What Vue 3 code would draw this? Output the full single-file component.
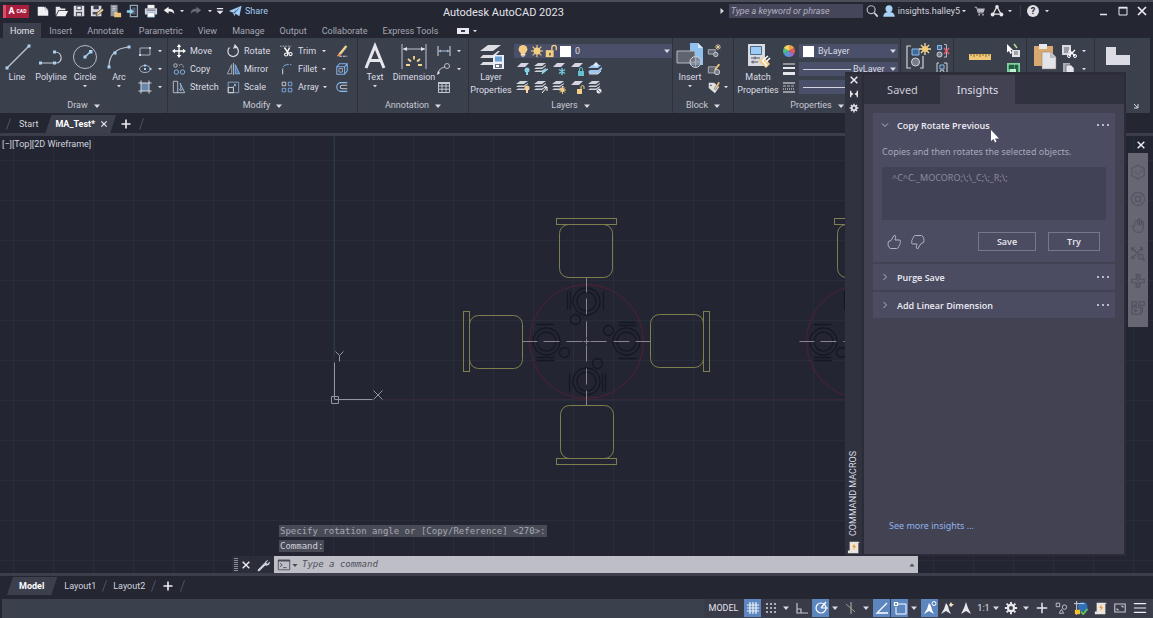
<script setup>
import { ref } from 'vue'

const quickAccess = ['new', 'open', 'save', 'saveas', 'webopen', 'websave', 'print', 'undo']
const ribbonTabs = ['Home', 'Insert', 'Annotate', 'Parametric', 'View', 'Manage', 'Output', 'Collaborate', 'Express Tools']
const drawTools = [
  { name: 'Line', icon: 'line' },
  { name: 'Polyline', icon: 'polyline' },
  { name: 'Circle', icon: 'circle', caret: true },
  { name: 'Arc', icon: 'arc', caret: true },
]
const modifyTools = [
  { name: 'Move', icon: 'move' }, { name: 'Rotate', icon: 'rotate' }, { name: 'Trim', icon: 'trim', caret: true }, { name: '', label: 'Erase', icon: 'erase' },
  { name: 'Copy', icon: 'copy' }, { name: 'Mirror', icon: 'mirror' }, { name: 'Fillet', icon: 'fillet', caret: true }, { name: '', label: 'Explode', icon: 'explode' },
  { name: 'Stretch', icon: 'stretch' }, { name: 'Scale', icon: 'scale' }, { name: 'Array', icon: 'array', caret: true }, { name: '', label: 'Offset', icon: 'offset' },
]
const layerBadges = ['b-off', 'b-iso', 'b-freeze', 'b-lock', 'b-cur', 'b-on', 'b-uniso', 'b-thaw', 'b-unlock', 'b-match']
const status = [
  { icon: 'st-grid', size: 'w18', on: true, label: 'Grid' },
  { icon: 'st-snap', size: 'w19', label: 'Snap' },
  { icon: 'caret', size: 'w12', label: 'Snap options' },
  { icon: 'st-ortho', size: 'w19', label: 'Ortho' },
  { icon: 'st-polar', size: 'w18', on: true, label: 'Polar' },
  { icon: 'caret', size: 'w12', label: 'Polar options' },
  { icon: 'st-iso', size: 'w19', label: 'Isodraft' },
  { icon: 'caret', size: 'w12', label: 'Isodraft options' },
  { icon: 'st-track', size: 'w18', on: true, label: 'Tracking' },
  { icon: 'st-osnap', size: 'w18', on: true, label: 'Object snap' },
  { icon: 'caret', size: 'w12', label: 'Object snap options' },
  { icon: 'st-ann', size: 'w18', on: true, label: 'Annotation visibility' },
  { icon: 'st-auto', size: 'w18', label: 'Autoscale' },
  { icon: 'st-scale', size: 'w19', label: 'Annotation scale' },
]
const status2 = [
  { icon: 'gear', size: 'w19', label: 'Workspace' },
  { icon: 'caret', size: 'w12', label: 'Workspace options' },
  { icon: 'st-plus', size: 'w19', label: 'Annotation monitor' },
  { icon: 'st-isolate', size: 'w20', label: 'Isolate objects' },
  { icon: 'st-perf', size: 'w20', label: 'Graphics performance' },
  { icon: 'st-macro', size: 'w19', label: 'Command macros' },
  { icon: 'st-full', size: 'w20', label: 'Clean screen' },
  { icon: 'st-menu', size: 'w20', label: 'Customization' },
]
const navTools = ['n-wheel', 'n-wheel2', 'n-hand', 'n-zoom', 'n-orbit', 'n-motion']
const macro = ref('^C^C._MOCORO;\\;\\_C;\\;_R;\\;')
const command = ref('')
const keyword = ref('')
</script>

<template>
  <div class="app">
    <svg class="sprite" aria-hidden="true">
      <symbol id="caret" viewBox="0 0 16 16"><path d="M0 4h16l-8 9z" fill="#d9dae2" /></symbol>
      <symbol id="new" viewBox="0 0 16 16"><path d="M2 3h7l5 5v5.500H2z" fill="#f1f1f4" /><path d="M10 2.500 14.500 7H10z" fill="#c5c6cf" /></symbol>
      <symbol id="open" viewBox="0 0 16 16"><path d="M2 13V3h4.500l1.500 2h5v2H5z" fill="#e5e5ea" /><path d="M5.500 8H16l-3 6H2.500z" fill="#f1f1f4" /></symbol>
      <symbol id="save" viewBox="0 0 16 16"><path d="M2 2h12v12H2z" fill="#dcdce3" /><path d="M5 2h6v5H5z" fill="#3a3b47" /><path d="M6 3h4v3H6z" fill="#f4f4f6" /><path d="M4.500 9h7v5h-7z" fill="#4a4b57" /><path d="M5.500 10.500h5v3h-5z" fill="#dcdce3" /></symbol>
      <symbol id="saveas" viewBox="0 0 16 16"><path d="M1 2h12v12H1z" fill="#dcdce3" /><path d="M4 2h6v4H4z" fill="#3a3b47" /><path d="M3 9h6v3H3z" fill="#4a4b57" /><path d="M7 13.500 8 10l6-5 2 2-6 5z" fill="#f0cf93" stroke="#23242f" stroke-width=".7" /></symbol>
      <symbol id="webopen" viewBox="0 0 16 16"><path d="M3 1h8v13H3z" fill="#8e93a0" /><path d="M5 3h4M5 5h4M5 7h3" stroke="#cfd1da" /><path d="M7 9h3l1 1h4v5H7z" fill="#e8c37b" /></symbol>
      <symbol id="websave" viewBox="0 0 16 16"><path d="M5 1.500h8v13H5z" fill="none" stroke="#8fa6b5" stroke-width="1.500" /><path d="M7 4h4v8H7z" fill="#55606e" /><path d="M1 7h4V5l4 3.500L5 12v-2H1z" fill="#8fd0ee" /></symbol>
      <symbol id="print" viewBox="0 0 16 16"><path d="M4 1h8v4H4z" fill="#f1f1f4" /><path d="M1 5h14v7H1z" fill="#cfd4dc" /><path d="M3 7h10" stroke="#525866" /><path d="M4 10h8v5H4z" fill="#fff" stroke="#7fa9d0" stroke-width=".8" /></symbol>
      <symbol id="undo" viewBox="0 0 16 16"><path d="M2 7 7.500 3v2.500c4 0 6.500 1.500 6.500 6-1.500-2.500-3.500-3-6.500-3V11z" fill="#f1f1f4" /></symbol>
      <symbol id="redo" viewBox="0 0 16 16"><path d="M14 7 8.500 3v2.500c-4 0-6.500 1.500-6.500 6 1.500-2.500 3.500-3 6.500-3V11z" fill="#676975" /></symbol>
      <symbol id="custom" viewBox="0 0 16 16"><path d="M3 3h10v2H3zM2.500 7.500h11L8 13z" fill="#e7e7ec" /></symbol>
      <symbol id="plane" viewBox="0 0 16 16"><path d="M1 8 15.500 2 13 14 8.500 11 7 14 6 10z" fill="#a3cdf2" /><path d="M6 10 14 3.500 7.500 10.500" fill="#35557c" /></symbol>
      <symbol id="search" viewBox="0 0 16 16"><circle cx="7" cy="6.500" r="4.500" fill="none" stroke="#b4b5bf" stroke-width="1.400" /><path d="m10.500 10 4 4.500" stroke="#d4d5dd" stroke-width="2" /></symbol>
      <symbol id="user" viewBox="0 0 16 16"><circle cx="8" cy="5.500" r="4" fill="#a9d0f5" /><path d="M1.500 14.500c0-4 3-5.500 6.500-5.500s6.500 1.500 6.500 5.500z" fill="#a9d0f5" /></symbol>
      <symbol id="cart" viewBox="0 0 16 16"><path d="M1 3h2.500l2 7.500h7" fill="none" stroke="#b9bac4" stroke-width="1.300" /><path d="M4.500 4.500h10l-1.500 5H6zM6 12h2v2H6zm5 0h2v2h-2z" fill="#b9bac4" /></symbol>
      <symbol id="adsk" viewBox="0 0 16 16"><path d="M8 3 3.500 11.500h9z" fill="none" stroke="#e7e7ec" stroke-width="1.500" /><circle cx="8" cy="3" r="2" fill="#e7e7ec" /><circle cx="3" cy="12" r="2.200" fill="#e7e7ec" /><circle cx="13" cy="12" r="2.200" fill="#e7e7ec" /></symbol>
      <symbol id="min" viewBox="0 0 12 12"><path d="M2 9.500h7" stroke="#e7e7ec" stroke-width="1.500" /></symbol>
      <symbol id="max" viewBox="0 0 12 12"><path d="M2 3h8v7H2z" fill="none" stroke="#e7e7ec" /><path d="M1.500 2.500h9" stroke="#e7e7ec" stroke-width="1.500" /></symbol>
      <symbol id="close" viewBox="0 0 12 12"><path d="m2 2 8 8m0-8-8 8" stroke="#eeeef2" stroke-width="1.700" /></symbol>
      <symbol id="plus" viewBox="0 0 12 12"><path d="M6 1.500v9M1.500 6h9" stroke="#eeeef2" stroke-width="1.600" /></symbol>

      <symbol id="line" viewBox="0 0 28 28"><path d="M4 26 26 4" stroke="#c2c8d3" stroke-width="1.200" /><path d="M2.500 24.500h3v3h-3zm22-22h3v3h-3z" fill="#a9d0f5" /></symbol>
      <symbol id="polyline" viewBox="0 0 28 28"><path d="M3 21h16c7 0 7-11-1-11" fill="none" stroke="#c2c8d3" stroke-width="1.200" /><path d="M2 19.500h3v3H2zm14 0h3v3h-3zm0-11h3v3h-3z" fill="#a9d0f5" /></symbol>
      <symbol id="circle" viewBox="0 0 28 28"><circle cx="14" cy="15" r="11.500" fill="none" stroke="#b6bcc8" /><path d="m14 15 6-6" stroke="#a9d0f5" stroke-width="1.500" /><path d="M12.500 13.500h3v3h-3zM18 8h3.500v3.500H18z" fill="#a9d0f5" /></symbol>
      <symbol id="arc" viewBox="0 0 28 28"><path d="M4 25C4 13 11 6 24 5" fill="none" stroke="#c2c8d3" stroke-width="1.200" /><path d="M2.500 23.500h3v3h-3zm6-14h3v3h-3zm14-6h3v3h-3z" fill="#a9d0f5" /></symbol>
      <symbol id="rect" viewBox="0 0 16 16"><path d="M3 5h10v7H3z" fill="none" stroke="#aab0bd" /><path d="M2 11h2v2H2zM12 4h2v2h-2z" fill="#c7dcf3" /></symbol>
      <symbol id="ellipse" viewBox="0 0 16 16"><ellipse cx="8" cy="8" rx="5.500" ry="3.500" fill="none" stroke="#aab0bd" /><path d="M7 7h2v2H7zM12.500 7h2v2h-2zM7 3.500h2v2H7z" fill="#a9d0f5" /></symbol>
      <symbol id="hatch" viewBox="0 0 16 16"><path d="M4 4h8v8H4z" fill="#6786ab" /><path d="M4 1.500v13M12 1.500v13M1.500 4h13M1.500 12h13" stroke="#d3d6de" /></symbol>

      <symbol id="move" viewBox="0 0 16 16"><path d="M8 1.500v13M1.500 8h13" stroke="#fff" stroke-width="1.500" /><path d="m8 0 2.500 3.500h-5zM8 16l2.500-3.500h-5zM0 8l3.500-2.500v5zM16 8l-3.500-2.500v5z" fill="#fff" /></symbol>
      <symbol id="copy" viewBox="0 0 16 16"><circle cx="4" cy="4" r="2" fill="none" stroke="#c2c8d3" /><path d="M8 4c3-3 5 0 5 2" fill="none" stroke="#c2c8d3" stroke-dasharray="2 1" /><circle cx="5" cy="11.500" r="2.500" fill="none" stroke="#8bbdf0" /><circle cx="12" cy="11.500" r="2.500" fill="none" stroke="#8bbdf0" /></symbol>
      <symbol id="stretch" viewBox="0 0 16 16"><path d="M1.500 1.500h5v13h-5z" fill="none" stroke="#c2c8d3" /><path d="M9 3.500 14.500 14.500H6" fill="none" stroke="#c2c8d3" /><path d="M10 4v8m-2-2 2 2.500 2-2.500" fill="none" stroke="#8bbdf0" /></symbol>
      <symbol id="rotate" viewBox="0 0 16 16"><path d="M11 3A6 6 0 1 1 4 4" fill="none" stroke="#d3d6de" stroke-width="1.400" /><path d="M9 0v6l5-3z" fill="#d3d6de" transform="rotate(20 10 3)" /></symbol>
      <symbol id="mirror" viewBox="0 0 16 16"><path d="M6.500 3v10.500H1.500z" fill="none" stroke="#aab0bd" /><path d="M8.500 1v14" stroke="#c2c8d3" /><path d="M10.500 3v10.500h5z" fill="#4d78ad" stroke="#8bbdf0" /></symbol>
      <symbol id="scale" viewBox="0 0 16 16"><path d="M2.500 2.500h12v12h-12z" fill="none" stroke="#8fa9c9" /><path d="M2.500 8.500h6v6h-6z" fill="none" stroke="#e0e2e8" /><path d="m8 8 3-3M9 5h2v2" fill="none" stroke="#8bbdf0" /></symbol>
      <symbol id="trim" viewBox="0 0 16 16"><path d="M0 2.500h13" stroke="#b6bcc8" stroke-dasharray="2 1" /><path d="m5 4 5 7M11 4 8 10" stroke="#fff" stroke-width="1.600" /><circle cx="7" cy="12" r="1.800" fill="none" stroke="#fff" stroke-width="1.200" /><circle cx="12" cy="11.500" r="1.800" fill="none" stroke="#fff" stroke-width="1.200" /></symbol>
      <symbol id="fillet" viewBox="0 0 16 16"><path d="M3 14V9c0-4 2-6 6-6h4" fill="none" stroke="#8bbdf0" stroke-dasharray="7 1.500" /><path d="M3 14V9" stroke="#c2c8d3" /></symbol>
      <symbol id="array" viewBox="0 0 16 16"><path d="M2.500 2.500h4v4h-4z" fill="none" stroke="#d3d6de" /><path d="M9.500 2.500h4v4h-4zM2.500 9.500h4v4h-4zM9.500 9.500h4v4h-4z" fill="none" stroke="#7fb0ea" /></symbol>
      <symbol id="erase" viewBox="0 0 16 16"><path d="M4 11 12 1.500 14 3 7 12z" fill="#f2d296" /><path d="M4 11 7 12l-1.500 2H2z" fill="#f08d54" /><path d="M5 14h9" stroke="#e0e2e8" stroke-dasharray="3 1" /></symbol>
      <symbol id="explode" viewBox="0 0 16 16"><path d="M2 5.500 5 2h9v8l-3 4H2zM2 5.500h9V14M11 5.500 14 2" fill="none" stroke="#7fb0ea" stroke-width="1.200" /><path d="M4.500 7.500h4v4h-4z" fill="none" stroke="#aab0bd" /></symbol>
      <symbol id="offset" viewBox="0 0 16 16"><path d="M14 3H7a5 5 0 0 0 0 10h7" fill="none" stroke="#8bbdf0" stroke-width="1.200" /><path d="M14 6H8a2 2 0 0 0 0 4h6" fill="none" stroke="#c2c8d3" stroke-width="1.200" /></symbol>

      <symbol id="bigtext" viewBox="0 0 28 28"><path d="M5 26 14 4 23 26M8 18.500h12" fill="none" stroke="#e6e7ec" stroke-width="3" /></symbol>
      <symbol id="dimension" viewBox="0 0 28 28"><path d="M2 2v25M26 2v25M3 7h22" stroke="#bfc4cf" fill="none" /><path d="m3 7 4-2v4zm22 0-4-2v4z" fill="#e6e7ec" /><path d="m8 17 3 2.500M14 14v3.500M20 17l-3 2.500M6 23h4M18 23h4" stroke="#f3d58f" stroke-width="1.800" /></symbol>
      <symbol id="dimlin" viewBox="0 0 16 16"><path d="M2 3v10M14 3v10M2 8h12" stroke="#b6bcc8" stroke-width="1.200" /><path d="m3 8 2-1.500v3zm10 0-2-1.500v3z" fill="#8bbdf0" /></symbol>
      <symbol id="leader" viewBox="0 0 16 16"><path d="M2 13C3 8 5 7 9 6" fill="none" stroke="#d3d6de" /><circle cx="11" cy="5" r="2.500" fill="none" stroke="#b6bcc8" /><path d="m1 14 1-4 2 2z" fill="#e6e7ec" /></symbol>
      <symbol id="table" viewBox="0 0 16 16"><path d="M2.500 3.500h11v10h-11zM2.500 7h11M2.500 10.200h11M6 4v9.500M10 4v9.500" fill="none" stroke="#c2c8d3" /><path d="M2 3h12v2H2z" fill="#c2c8d3" /></symbol>
      <symbol id="layerprop" viewBox="0 0 28 28"><path d="m3 9 8-6h13l-8 6zM3 16l3-3h10l5-4 2 0-7 7zM3 23l3-3h10l6-5-6 8z" fill="#dddee4" /><path d="M16 13h11v14H16z" fill="#eceef3" /><path d="M18 14.500h7v5h-7z" fill="#6ba0d8" /><path d="M18 22h7v4h-7z" fill="#66707f" /><path d="M19 23h3v2h-3z" fill="#fff" /></symbol>
      <symbol id="bulb" viewBox="0 0 16 16"><circle cx="8" cy="6" r="5" fill="#f2cd83" /><path d="M5.500 9h5v4.500h-5z" fill="#f2cd83" /><path d="M5.500 12h5m-4 2h3" stroke="#e9e9ee" /></symbol>
      <symbol id="sun" viewBox="0 0 16 16"><path d="M8 1v14M1 8h14M3 3l10 10M13 3 3 13" stroke="#f2cd83" stroke-width="1.300" /><circle cx="8" cy="8" r="4" fill="#f2cd83" /></symbol>
      <symbol id="unlock" viewBox="0 0 16 16"><path d="M2 7h9v8H2z" fill="#f2cd83" /><path d="M9 7V4a2.500 2.500 0 0 1 5 0v3" fill="none" stroke="#f2cd83" stroke-width="1.500" /><path d="M6 10h1.500v3H6z" fill="#4a4030" /></symbol>
      <symbol id="sheet" viewBox="0 0 16 16"><path d="m2 6 4-4h8l-4 4z" fill="#d6d4e2" /></symbol>
      <symbol id="stack" viewBox="0 0 16 16"><path d="m1 5 4-3h8l-4 3zM1 8l2-1.500h6L13 4v1L9 8zM1 11l2-1.500h6L13 7v1l-4 3z" fill="#d3d5dd" /></symbol>
      <symbol id="b-off" viewBox="0 0 16 16"><use href="#sheet" /><circle cx="12" cy="9" r="2.500" fill="#88d3e3" /><path d="M11 10h2v4h-2z" fill="#88d3e3" /></symbol>
      <symbol id="b-iso" viewBox="0 0 16 16"><use href="#stack" /><path d="m15 8-6 5 1-3z" fill="#c2ecf5" stroke="#88d3e3" /></symbol>
      <symbol id="b-freeze" viewBox="0 0 16 16"><use href="#sheet" /><path d="M11 7v7M8 8.500l6 4M14 8.500l-6 4" stroke="#6fc6dc" stroke-width="1.500" /></symbol>
      <symbol id="b-lock" viewBox="0 0 16 16"><use href="#sheet" /><path d="M9 10h6v5H9z" fill="#62c0ce" /><path d="M10.500 10V8a1.500 1.500 0 0 1 3 0v2" fill="none" stroke="#62c0ce" /></symbol>
      <symbol id="b-cur" viewBox="0 0 16 16"><path d="m1 7 4-3h9l-3 3zM1 11l2-2h8l4-3v2l-4 5H3z" fill="#9fc7ef" /><path d="m6 4 3-3 3 3-3 2z" fill="#d8e9fa" /><path d="m2 13 9 0 3-3" stroke="#d3d5dd" fill="none" /></symbol>
      <symbol id="b-on" viewBox="0 0 16 16"><use href="#stack" /><circle cx="12" cy="9" r="2.500" fill="#f6cf93" /><path d="M11 10h2v4h-2z" fill="#f2dcb0" /></symbol>
      <symbol id="b-uniso" viewBox="0 0 16 16"><use href="#stack" /><path d="m9 14 5-6m0 4V8h-3" stroke="#fff" fill="none" /></symbol>
      <symbol id="b-thaw" viewBox="0 0 16 16"><use href="#stack" /><path d="M11.500 7v8M8 11h7M9 8.500l5 5M14 8.500l-5 5" stroke="#f2cd83" /><circle cx="11.500" cy="11" r="2" fill="#f2cd83" /></symbol>
      <symbol id="b-unlock" viewBox="0 0 16 16"><use href="#sheet" /><path d="M8 10h5v5H8z" fill="#f2cd83" /><path d="M12 10V8a1.500 1.500 0 0 1 3 0v2" fill="none" stroke="#f2cd83" /></symbol>
      <symbol id="b-match" viewBox="0 0 16 16"><use href="#stack" /><circle cx="12" cy="12" r="2.500" fill="#e6e7ec" /><path d="m10 10 4 4" stroke="#777" /></symbol>

      <symbol id="insert" viewBox="0 0 28 28"><path d="M14 1h8l5 5v17H14z" fill="#8fc0ee" /><path d="M22 1v5h5" fill="#d6e9fb" /><path d="M1 9h18v12H1z" fill="#60646f" stroke="#b4b8c2" /><circle cx="19.500" cy="20" r="5.500" fill="#777b86" fill-opacity=".7" stroke="#d0d3da" /><path d="M14 20h11M19.500 14.500v11" stroke="#b4b8c2" stroke-width=".7" /></symbol>
      <symbol id="blk1" viewBox="0 0 16 16"><path d="M1.500 6.500h8v5h-8z" fill="#60646f" stroke="#b4b8c2" /><circle cx="10" cy="12" r="2.500" fill="#777b86" stroke="#d0d3da" /><path d="M12.500 0v7M9 3.500h7M10 1l5 5M15 1l-5 5" stroke="#f4dba8" stroke-width=".9" /></symbol>
      <symbol id="blk2" viewBox="0 0 16 16"><path d="M1.500 5.500h9v7h-9z" fill="#60646f" stroke="#b4b8c2" /><circle cx="11.500" cy="11.500" r="3" fill="#777b86" stroke="#d0d3da" /><path d="m8 9 5-7 2 1-5 6z" fill="#f4c77e" /></symbol>
      <symbol id="blk3" viewBox="0 0 16 16"><path d="M2 3h6l6 5-5 7-7-6z" fill="#dfe0e6" /><circle cx="4.500" cy="6" r="1" fill="#555" /><path d="m8 10 5-8 2 1-5 8z" fill="#f4c77e" stroke="#4a4e5b" stroke-width=".5" /></symbol>
      <symbol id="match" viewBox="0 0 28 28"><path d="M4 2h17v22H4z" fill="#d9dbe2" /><path d="M6.500 4.500h11v8h-11z" fill="#9ccbf3" stroke="#4f6c8b" /><path d="M7 16h9M7 20h7M11 14.500v3M9 18.500v3" stroke="#50545f" /><path d="m14 19 6-4 6 7-4 4z" fill="#eecb89" /><path d="m18 18 5 6m3-8-4 4m-4-1 6-5" stroke="#fff" stroke-width="1.500" /></symbol>
      <symbol id="wheel" viewBox="0 0 16 16"><path d="M8 8V2a6 6 0 0 1 5.200 3z" fill="#f0a04c" /><path d="M8 8l5.200-3a6 6 0 0 1 0 6z" fill="#e35d5d" /><path d="m8 8 5.200 3A6 6 0 0 1 8 14z" fill="#9770cf" /><path d="M8 8v6a6 6 0 0 1-5.200-3z" fill="#4f9be0" /><path d="m8 8-5.200 3a6 6 0 0 1 0-6z" fill="#54bd80" /><path d="M8 8 2.800 5A6 6 0 0 1 8 2z" fill="#f0d764" /></symbol>
      <symbol id="lweight" viewBox="0 0 16 16"><path d="M2 3h12" stroke="#e6e7ec" /><path d="M2 7h12" stroke="#e6e7ec" stroke-width="2" /><path d="M2 12.500h12" stroke="#e6e7ec" stroke-width="3" /></symbol>
      <symbol id="ltype" viewBox="0 0 16 16"><path d="M2 4h12M2 13h12" stroke="#b4b8c2" stroke-width="1.400" /><path d="M2 7h12" stroke="#b4b8c2" stroke-dasharray="3 1" /><path d="M2 10h12" stroke="#b4b8c2" stroke-dasharray="1 1" stroke-width="1.400" /></symbol>
      <symbol id="group" viewBox="0 0 28 28"><path d="M7 4H3v22h4M16 26h3V14" fill="none" stroke="#d0d3da" stroke-width="1.200" /><path d="M8 7h7v6H8z" fill="#3c6796" stroke="#8bbdf0" /><circle cx="11.500" cy="20" r="4" fill="#777b86" stroke="#d0d3da" /><path d="M21 1v12M15 7h12M17 3l8 8M25 3l-8 8" stroke="#f7dc9c" stroke-width="1.300" /><circle cx="21" cy="7" r="3" fill="#f4c975" /></symbol>
      <symbol id="ungroup" viewBox="0 0 16 16"><path d="M2.500 2.500h4v4h-4z" fill="#3c6796" stroke="#8bbdf0" /><circle cx="4.500" cy="11.500" r="2.500" fill="#777b86" stroke="#d0d3da" /><path d="M9 1.500h2.500V14H9" fill="none" stroke="#b4b8c2" /><path d="m9 5 5 6m0-6-5 6" stroke="#e35d6d" stroke-width="1.300" /></symbol>
      <symbol id="groupedit" viewBox="0 0 16 16"><path d="M4 2H2v12M9 2h3v9" fill="none" stroke="#d0d3da" /><path d="M5 4h4v4H5z" fill="none" stroke="#8bbdf0" /><circle cx="7" cy="11" r="2" fill="none" stroke="#d0d3da" /></symbol>
      <symbol id="ruler" viewBox="0 0 28 28"><path d="M3 12h22v6H3z" fill="#eec777" /><path d="M5 12v2m3-2v3m3-3v2m3-2v3m3-3v2m3-2v3m3-3v2" stroke="#8a6a2c" /></symbol>
      <symbol id="select" viewBox="0 0 16 16"><path d="m2 1 6 6H5.500L7 10 5.500 11 4 8 2 9.500z" fill="#fff" /><path d="M7 7h8v7H7z" fill="#e0e2e8" /><path d="M9 9h4M9 11h4" stroke="#666" /><path d="m9 1 3 4" stroke="#b7dc8e" stroke-width="1.500" /></symbol>
      <symbol id="calc" viewBox="0 0 16 16"><path d="M2 2h13v12H2z" fill="#7fd3a2" /><path d="M4 4h5v4H4zm6 0h3v8h-3zM4 9h5" fill="#225e45" stroke="#225e45" stroke-width=".6" /><path d="M5 8h6v4H5z" fill="#c0f1d2" /></symbol>
      <symbol id="paste" viewBox="0 0 28 28"><path d="M4 4h19v20H4z" fill="#d9aa70" /><path d="M9 2h8v5H9z" fill="#e8e9ee" /><path d="M12 10h9l5 5v12H12z" fill="#e3e4ea" stroke="#8d7a66" stroke-width=".5" /><path d="M20 10v6h6" fill="#b8bac4" /></symbol>
      <symbol id="cut" viewBox="0 0 16 16"><path d="M1 2h9v10H1z" fill="#d9dae1" /><path d="M3 5h5M3 7h5M3 9h4" stroke="#555a66" /><path d="m8 7 6 6m0-6-6 6" stroke="#fff" stroke-width="1.300" /><circle cx="8" cy="13" r="1.500" fill="none" stroke="#fff" /><circle cx="14" cy="13" r="1.500" fill="none" stroke="#fff" /></symbol>
      <symbol id="copyclip" viewBox="0 0 16 16"><path d="M2 2h7v10H2z" fill="#a9acb7" /><path d="M5 4h5l3 3v8H5z" fill="#e6e7ec" stroke="#555a66" stroke-width=".7" /></symbol>
      <symbol id="base" viewBox="0 0 28 28"><path d="M2 5h10v8h14v10H2z" fill="#dcdde4" /></symbol>

      <symbol id="hide" viewBox="0 0 12 12"><path d="M2 2v8M10 2v8" stroke="#e7e7ec" stroke-width="1.500" /><path d="M2 3.500 5.500 6 2 8.500zM10 3.500 6.500 6 10 8.500z" fill="#e7e7ec" /></symbol>
      <symbol id="gear" viewBox="0 0 16 16"><path d="M8 1v14M1 8h14M3 3l10 10M13 3 3 13" stroke="#e7e7ec" stroke-width="2.200" /><circle cx="8" cy="8" r="3.500" fill="#3b3b4b" stroke="#e7e7ec" stroke-width="2.500" /></symbol>
      <symbol id="dots" viewBox="0 0 16 16"><path d="M2 7h2v2H2zm5 0h2v2H7zm5 0h2v2h-2z" fill="#b9b9c8" /></symbol>
      <symbol id="thumb" viewBox="0 0 16 16"><path d="M2.500 7.500 5 6.500 8 1.500c2-.5 2 1 1.300 3L9 6h4c2 0 1.800 2 1 2.500.6 1 .2 2-.6 2.200.2 1-.3 1.800-1 2 0 1.200-.6 1.800-1.800 1.800H4.500c-2.500-1-3-5-2-7" fill="none" stroke="#b4b3c6" /></symbol>
      <symbol id="st-macro" viewBox="0 0 16 16"><path d="M3 2h10l2 1h-2v12H1v-3h2z" fill="#e8e4e0" /><path d="M5 4h6v8H5z" fill="#f5e6cd" /><path d="m8.500 4-2.500 4h2l-1 3.500 3.500-4.500H8.500z" fill="#e1963d" /></symbol>

      <symbol id="terminal" viewBox="0 0 16 16"><path d="M1.500 2.500h13v11h-13z" fill="none" stroke="#4b4c58" /><path d="M1 2h14v2H1z" fill="#4b4c58" /><path d="m3.500 6 2.500 2-2.500 2M7 11h4" fill="none" stroke="#4b4c58" /></symbol>
      <symbol id="wrench" viewBox="0 0 16 16"><path d="m2 14 7-7" stroke="#cfd0d8" stroke-width="2.500" stroke-linecap="round" /><path d="M13 2.500 10.500 5l.5 1 1 .5L14.500 4c1 3-2 5.500-5 4.500-2-3 .500-6 3.500-6z" fill="#cfd0d8" /></symbol>

      <symbol id="st-grid" viewBox="0 0 16 16"><path d="M5 2v12M8 2v12M11 2v12M2 5h12M2 8h12M2 11h12" stroke="#eef3fa" stroke-width="1.200" /></symbol>
      <symbol id="st-snap" viewBox="0 0 16 16"><path d="M3 4h10M3 8h10M3 12h10" stroke="#d4d5dd" stroke-width="1.500" stroke-dasharray="2 2" /></symbol>
      <symbol id="st-ortho" viewBox="0 0 16 16"><path d="M3 3v10h11M3 9h4v4" fill="none" stroke="#c2c4ce" stroke-width="1.200" /></symbol>
      <symbol id="st-polar" viewBox="0 0 16 16"><circle cx="8" cy="8" r="5" fill="none" stroke="#fff" stroke-width="1.200" /><path d="M8 8h7M8 8l5-6" stroke="#fff" stroke-width="1.200" /></symbol>
      <symbol id="st-iso" viewBox="0 0 16 16"><path d="M8 2v12" stroke="#b4b5bf" /><path d="m3 4 9 8" stroke="#93a57c" /></symbol>
      <symbol id="st-track" viewBox="0 0 16 16"><path d="M13 3 3 13h11" fill="none" stroke="#fff" stroke-width="1.300" /></symbol>
      <symbol id="st-osnap" viewBox="0 0 16 16"><path d="M6 4h8v10H4V7" fill="none" stroke="#fff" /><path d="M2.500 2.500h3v3h-3z" fill="none" stroke="#fff" stroke-width="1.200" /></symbol>
      <symbol id="st-ann" viewBox="0 0 16 16"><path d="M7 3 5 9l-3 5 5-3 5 3-2-4-1-4z" fill="#fff" /><circle cx="12" cy="3.500" r="2" fill="none" stroke="#fff" /></symbol>
      <symbol id="st-auto" viewBox="0 0 16 16"><path d="M7 3 5 9l-3 5 5-3 5 3-2-4-1-4z" fill="#e7e7ec" /><path d="m10 5 2-3 1 2 2 0-3 3z" fill="#f6e5bd" /></symbol>
      <symbol id="st-scale" viewBox="0 0 16 16"><path d="m8 2-2 6-3 6 5-3 5 3-3-6z" fill="#e7e7ec" /></symbol>
      <symbol id="st-plus" viewBox="0 0 16 16"><path d="M8 2v12M2 8h12" stroke="#e7e7ec" stroke-width="1.700" /></symbol>
      <symbol id="st-isolate" viewBox="0 0 16 16"><path d="M2.500 2.500h4v4h-4zM6 14l2.500-4.500L11 14z" fill="none" stroke="#c9cad3" /><circle cx="12" cy="7" r="2.500" fill="none" stroke="#c9cad3" /></symbol>
      <symbol id="st-perf" viewBox="0 0 16 16"><circle cx="10" cy="6.500" r="5.500" fill="#2e6fb5" /><path d="M3 0v16M0 3h12" stroke="#d6e2f3" /><path d="M1 10h6v5H1z" fill="#f2c22e" /><path d="m8 12 2.500 3L15.500 9" fill="none" stroke="#5fc06c" stroke-width="2.200" /></symbol>
      <symbol id="st-full" viewBox="0 0 16 16"><path d="M2 3.500h12v9H2z" fill="none" stroke="#c9cad3" stroke-width="1.200" /><path d="M8.500 5.500H12V8zM7.500 10.500H4V8z" fill="#c9cad3" /></symbol>
      <symbol id="st-menu" viewBox="0 0 16 16"><path d="M1 3h14M1 8h14M1 13h14" stroke="#eeeef2" stroke-width="1.400" /></symbol>

      <symbol id="n-wheel" viewBox="0 0 18 18"><path d="m9 1 7 4v8l-7 4-7-4V5z" fill="none" stroke="#555663" stroke-width="1.300" /><path d="m5 8 4 4 5-6" fill="none" stroke="#555663" /></symbol>
      <symbol id="n-wheel2" viewBox="0 0 18 18"><circle cx="9" cy="9" r="7.500" fill="none" stroke="#555663" stroke-width="1.300" /><circle cx="9" cy="9" r="3" fill="none" stroke="#555663" stroke-width="1.300" /><path d="m3 4 3 3m9-3-3 3M4 14l3-3m7 3-3-3" stroke="#555663" /></symbol>
      <symbol id="n-hand" viewBox="0 0 18 18"><path d="m5 10-2-2-1 1 4 7h7l2-5V4h-2v4V2h-2v6V1H9v7L8 3H6z" fill="none" stroke="#50515e" /></symbol>
      <symbol id="n-zoom" viewBox="0 0 18 18"><path d="m2 2 12 12M14 2 2 14M2 5V2h3m6 0h3v3M2 11v3h3" fill="none" stroke="#50515e" stroke-width="1.300" /><circle cx="12" cy="12" r="3" fill="#62636e" stroke="#50515e" /><path d="m14 14 3 3" stroke="#50515e" stroke-width="1.500" /></symbol>
      <symbol id="n-orbit" viewBox="0 0 18 18"><path d="M7 2h4v5h5v4h-5v5H7v-5H2V7h5z" fill="none" stroke="#50515e" stroke-width="1.300" /><path d="M9 1v16" stroke="#50515e" /></symbol>
      <symbol id="n-motion" viewBox="0 0 18 18"><path d="M2 2h5v4H2zm8 0h6v4h-6zM2 8h10v8H2zM14 8v6" fill="none" stroke="#50515e" stroke-width="1.300" /><path d="m5 9.500 4 2.500-4 2.500z" fill="#50515e" /></symbol>

      <g id="chair">
        <rect x="-30" y="-123" width="60" height="6" />
        <rect x="-27" y="-117" width="53" height="53" rx="9" />
      </g>
      <g id="plate">
        <circle cx="0" cy="-40" r="13.500" /><circle cx="0" cy="-40" r="9.500" /><circle cx="-11" cy="-22" r="5" />
        <path d="M-19-50v18M-16-50v18M17-50v18" />
      </g>
      <g id="setting">
        <circle r="57" stroke="#541f33" />
        <g stroke="#151824" stroke-width="1.300"><use href="#plate" /><use href="#plate" transform="rotate(90)" /><use href="#plate" transform="rotate(180)" /><use href="#plate" transform="rotate(270)" /></g>
        <path d="M0-64v15M0-43v16M0-20V-4M0 4v16M0 27v16M0 49v15M-64 0h15M-43 0h16M-20 0H-4M4 0h16M27 0h16M49 0h15M-3 0h6M0-3v6" stroke="#8b8490" />
      </g>
    </svg>

    <header class="titlebar">
      <button class="logo" aria-label="Application menu"><b>A</b><small>CAD</small></button>
      <nav class="quick">
        <button v-for="q in quickAccess" :key="q" class="w18" :aria-label="q"><svg class="i14"><use :href="'#' + q" /></svg></button>
        <button class="w8" aria-label="Undo list"><svg class="i4"><use href="#caret" /></svg></button>
        <button class="w20" aria-label="Redo"><svg class="i14"><use href="#redo" /></svg></button>
        <button class="w8" aria-label="Redo list"><svg class="i4"><use href="#caret" /></svg></button>
        <button class="w12" aria-label="Customize"><svg class="i10"><use href="#custom" /></svg></button>
        <button class="share"><svg class="i14"><use href="#plane" /></svg>Share</button>
      </nav>
      <h1>Autodesk AutoCAD 2023</h1>
      <svg class="i6 side"><use href="#caret" /></svg>
      <input v-model="keyword" class="keyword" type="text" placeholder="Type a keyword or phrase" aria-label="Search">
      <button class="w18" aria-label="Search"><svg class="i14"><use href="#search" /></svg></button>
      <button class="account"><svg class="i14"><use href="#user" /></svg>insights.halley5<svg class="i4"><use href="#caret" /></svg></button>
      <button class="w16" aria-label="App store"><svg class="i12"><use href="#cart" /></svg></button>
      <button class="w18" aria-label="Autodesk"><svg class="i14"><use href="#adsk" /></svg></button>
      <button class="w8" aria-label="Autodesk options"><svg class="i4"><use href="#caret" /></svg></button>
      <button class="help" aria-label="Help"><i>?</i><svg class="i4"><use href="#caret" /></svg></button>
      <div class="wincontrols">
        <button class="w18" aria-label="Minimize"><svg class="i12"><use href="#min" /></svg></button>
        <button class="w18" aria-label="Maximize"><svg class="i12"><use href="#max" /></svg></button>
        <button class="w18" aria-label="Close"><svg class="i12"><use href="#close" /></svg></button>
      </div>
    </header>

    <nav class="ribbontabs">
      <button v-for="(t, i) in ribbonTabs" :key="t" :class="{ on: i === 0 }">{{ t }}</button>
      <button class="mini" aria-label="Minimize ribbon"><span></span><svg class="i4"><use href="#caret" /></svg></button>
    </nav>

    <section class="ribbon">
      <div class="panel draw">
        <div class="body">
          <button v-for="d in drawTools" :key="d.name" class="big"><svg class="i28"><use :href="'#' + d.icon" /></svg><span>{{ d.name }}</span><svg v-if="d.caret" class="i4"><use href="#caret" /></svg></button>
          <div class="smalls">
            <button v-for="s in ['rect', 'ellipse', 'hatch']" :key="s" class="small" :aria-label="s"><svg class="i16"><use :href="'#' + s" /></svg><svg class="i4"><use href="#caret" /></svg></button>
          </div>
        </div>
        <button class="foot">Draw<svg class="i6"><use href="#caret" /></svg></button>
      </div>
      <div class="panel modify">
        <div class="body tools">
          <button v-for="m in modifyTools" :key="m.icon" class="tool" :aria-label="m.name || m.label"><svg class="i14"><use :href="'#' + m.icon" /></svg><span v-if="m.name">{{ m.name }}</span><svg v-if="m.caret" class="i4"><use href="#caret" /></svg></button>
        </div>
        <button class="foot">Modify<svg class="i6"><use href="#caret" /></svg></button>
      </div>
      <div class="panel annotation">
        <div class="body">
          <button class="big"><svg class="i28"><use href="#bigtext" /></svg><span>Text</span><svg class="i4"><use href="#caret" /></svg></button>
          <button class="big wide"><svg class="i28"><use href="#dimension" /></svg><span>Dimension</span></button>
          <div class="smalls">
            <button class="small" aria-label="Linear"><svg class="i16"><use href="#dimlin" /></svg><svg class="i4"><use href="#caret" /></svg></button>
            <button class="small" aria-label="Leader"><svg class="i16"><use href="#leader" /></svg><svg class="i4"><use href="#caret" /></svg></button>
            <button class="small" aria-label="Table"><svg class="i16"><use href="#table" /></svg></button>
          </div>
        </div>
        <button class="foot">Annotation<svg class="i6"><use href="#caret" /></svg></button>
      </div>
      <div class="panel layers">
        <div class="body">
          <button class="big wide"><svg class="i28"><use href="#layerprop" /></svg><span>Layer<br>Properties</span></button>
          <div class="layerside">
            <button class="combo"><svg class="i14"><use href="#bulb" /></svg><svg class="i14"><use href="#sun" /></svg><svg class="i14"><use href="#unlock" /></svg><i class="swatch"></i><span>0</span><svg class="i6"><use href="#caret" /></svg></button>
            <div class="badges">
              <button v-for="b in layerBadges" :key="b" :aria-label="b"><svg class="i16"><use :href="'#' + b" /></svg></button>
            </div>
          </div>
        </div>
        <button class="foot">Layers<svg class="i6"><use href="#caret" /></svg></button>
      </div>
      <div class="panel block">
        <div class="body">
          <button class="big"><svg class="i28"><use href="#insert" /></svg><span>Insert</span><svg class="i4"><use href="#caret" /></svg></button>
          <div class="smalls">
            <button class="small" aria-label="Create"><svg class="i14"><use href="#blk1" /></svg></button>
            <button class="small" aria-label="Edit"><svg class="i14"><use href="#blk2" /></svg></button>
            <button class="small" aria-label="Attributes"><svg class="i14"><use href="#blk3" /></svg><svg class="i4"><use href="#caret" /></svg></button>
          </div>
        </div>
        <button class="foot">Block<svg class="i6"><use href="#caret" /></svg></button>
      </div>
      <div class="panel properties">
        <div class="body">
          <button class="big wide"><svg class="i28"><use href="#match" /></svg><span>Match<br>Properties</span></button>
          <div class="smalls">
            <svg class="i16"><use href="#wheel" /></svg><svg class="i16"><use href="#lweight" /></svg><svg class="i16"><use href="#ltype" /></svg>
          </div>
          <div class="combos">
            <button class="combo"><i class="swatch"></i><span>ByLayer</span><svg class="i6"><use href="#caret" /></svg></button>
            <button class="combo"><i class="rule"></i><span>ByLayer</span><svg class="i6"><use href="#caret" /></svg></button>
            <button class="combo"><i class="rule"></i><span>ByLayer</span><svg class="i6"><use href="#caret" /></svg></button>
          </div>
        </div>
        <button class="foot">Properties<svg class="i6"><use href="#caret" /></svg></button>
      </div>
      <div class="panel groups">
        <div class="body">
          <button class="big" aria-label="Group"><svg class="i28"><use href="#group" /></svg></button>
          <div class="smalls"><svg class="i16"><use href="#ungroup" /></svg><svg class="i16"><use href="#groupedit" /></svg></div>
        </div>
      </div>
      <div class="panel utilities">
        <div class="body">
          <button class="big wide" aria-label="Measure"><svg class="i28"><use href="#ruler" /></svg></button>
          <div class="smalls"><svg class="i16"><use href="#select" /></svg><svg class="i16"><use href="#calc" /></svg></div>
        </div>
      </div>
      <div class="panel clipboard">
        <div class="body">
          <button class="big" aria-label="Paste"><svg class="i28"><use href="#paste" /></svg></button>
          <div class="smalls">
            <button class="small" aria-label="Cut"><svg class="i16"><use href="#cut" /></svg><svg class="i4"><use href="#caret" /></svg></button>
            <button class="small" aria-label="Copy clip"><svg class="i16"><use href="#copyclip" /></svg><svg class="i4"><use href="#caret" /></svg></button>
          </div>
        </div>
      </div>
      <div class="panel view">
        <div class="body"><button class="big" aria-label="Base"><svg class="i28"><use href="#base" /></svg></button></div>
        <button class="foot launcher" aria-label="View options"><svg class="i8" viewBox="0 0 8 8"><path d="m2 2 4 4M6 2v4H2" fill="none" stroke="#d9dae2" /></svg></button>
      </div>
    </section>

    <nav class="filetabs">
      <i class="slash"></i>
      <button class="start">Start</button>
      <div class="active"><button>MA_Test*</button><button aria-label="Close tab"><svg class="i8"><use href="#close" /></svg></button></div>
      <button class="w20" aria-label="New tab"><svg class="i12"><use href="#plus" /></svg></button>
      <i class="slash"></i>
    </nav>

    <main class="canvas">
      <svg class="drawing" aria-label="Table and chairs">
        <defs><pattern id="grid" width="40" height="40" x="13" y="24" patternUnits="userSpaceOnUse"><path d="M.5 0v40M0 .5h40" stroke="#292c39" fill="none" /></pattern></defs>
        <rect width="100%" height="100%" fill="url(#grid)" />
        <g fill="none" transform="translate(.5 .5)">
          <path d="M334 0v220" stroke="#2b3a45" />
          <path d="M379 263h476" stroke="#37253a" />
          <path d="M334 226v37h38M331 260h7v7h-7z" stroke="#92949f" />
          <path d="m335 215 4 4v6m0-6 4-4M373 254l9 9m0-9-9 9" stroke="#92949f" />
          <g stroke="#7d7f4c">
            <g transform="translate(586 205)"><use href="#chair" /><use href="#chair" transform="rotate(90)" /><use href="#chair" transform="rotate(180)" /><use href="#chair" transform="rotate(270)" /></g>
            <use href="#chair" transform="translate(864 205)" />
          </g>
          <use href="#setting" transform="translate(586 205)" />
          <use href="#setting" transform="translate(863 205)" />
        </g>
      </svg>
      <button class="viewlabel">[−][Top][2D Wireframe]</button>
      <button class="viewclose" aria-label="Close viewport"><svg class="i10"><use href="#close" /></svg></button>
      <nav class="navbar">
        <button v-for="n in navTools" :key="n" :aria-label="n"><svg class="i16"><use :href="'#' + n" /></svg></button>
      </nav>
      <section class="cmd">
        <p><span>Specify rotation angle or [Copy/Reference] &lt;270&gt;:</span></p>
        <p class="latest"><span>Command:</span></p>
        <div class="cmdrow">
          <i class="grip"></i>
          <button class="w16" aria-label="Close command line"><svg class="i10"><use href="#close" /></svg></button>
          <button class="w20" aria-label="Customize command line"><svg class="i14"><use href="#wrench" /></svg></button>
          <label class="cmdfield">
            <svg class="i14"><use href="#terminal" /></svg><svg class="i6" viewBox="0 0 16 16"><path d="M1 5h14l-7 8z" fill="#4b4c58" /></svg>
            <input v-model="command" type="text" placeholder="Type a command" aria-label="Command">
            <svg class="i6" viewBox="0 0 16 16"><path d="M1 12h14L8 4z" fill="#4b4c58" /></svg>
          </label>
        </div>
      </section>
    </main>

    <nav class="layouts">
      <button class="model">Model</button>
      <button>Layout1</button><i class="slash"></i>
      <button>Layout2</button><i class="slash"></i>
      <button aria-label="Add layout"><svg class="i12"><use href="#plus" /></svg></button><i class="slash"></i>
    </nav>

    <footer class="status">
      <button class="modelbtn">MODEL</button>
      <button v-for="s in status" :key="s.label" :class="[s.size, { on: s.on }]" :aria-label="s.label"><svg :class="s.icon === 'caret' ? 'i6' : 'i16'"><use :href="'#' + s.icon" /></svg></button>
      <button class="ratio">1:1<svg class="i6"><use href="#caret" /></svg></button>
      <button v-for="s in status2" :key="s.label" :class="s.size" :aria-label="s.label"><svg :class="s.icon === 'caret' ? 'i6' : 'i14'"><use :href="'#' + s.icon" /></svg></button>
    </footer>

    <aside class="palette">
      <div class="strip">
        <button aria-label="Close palette"><svg class="i10"><use href="#close" /></svg></button>
        <button aria-label="Auto-hide"><svg class="i10"><use href="#hide" /></svg></button>
        <button aria-label="Palette settings"><svg class="i10"><use href="#gear" /></svg></button>
        <span>COMMAND MACROS</span>
        <svg class="i14"><use href="#st-macro" /></svg>
      </div>
      <div class="content">
        <div class="ptabs"><button>Saved</button><button class="on">Insights</button></div>
        <div class="cards">
          <article class="expanded">
            <header><button><svg class="chev" viewBox="0 0 8 8"><path d="m1 2.500 3 3 3-3" /></svg>Copy Rotate Previous</button><button aria-label="More"><svg class="i16"><use href="#dots" /></svg></button></header>
            <p>Copies and then rotates the selected objects.</p>
            <textarea v-model="macro" aria-label="Macro" readonly></textarea>
            <div class="actions">
              <button aria-label="Like"><svg class="i16"><use href="#thumb" /></svg></button>
              <button class="down" aria-label="Dislike"><svg class="i16"><use href="#thumb" /></svg></button>
              <button class="act wide">Save</button>
              <button class="act">Try</button>
            </div>
          </article>
          <article v-for="t in ['Purge Save', 'Add Linear Dimension']" :key="t">
            <header><button><svg class="chev" viewBox="0 0 8 8"><path d="m2.500 1 3 3-3 3" /></svg>{{ t }}</button><button aria-label="More"><svg class="i16"><use href="#dots" /></svg></button></header>
          </article>
        </div>
        <a href="#insights">See more insights ...</a>
      </div>
      <svg class="cursor" viewBox="0 0 10 14"><path d="M1 0v11l2.500-2 1.500 3.500 1.500-.7L5 8.500h4z" fill="#fff" /></svg>
    </aside>
  </div>
</template>

<style>
body { background: #242632; }
</style>

<style scoped>
.app, .app * { box-sizing: border-box; }
.app { position: relative; display: flex; flex-direction: column; min-height: 100vh; background: #242632; border-top: 2px solid #4b4d59; color: #d3d4dd; font: 9px/13px Roboto, "Open Sans", sans-serif; overflow: hidden; }
.sprite { position: absolute; width: 0; height: 0; }
button { display: flex; align-items: center; justify-content: center; padding: 0; margin: 0; border: 0; background: none; color: inherit; font: inherit; white-space: nowrap; }
svg { flex: none; display: block; }
.i4 { width: 4px; height: 4px; }
.i6 { width: 6px; height: 6px; }
.i8 { width: 8px; height: 8px; }
.i10 { width: 10px; height: 10px; }
.i12 { width: 12px; height: 12px; }
.i14 { width: 14px; height: 14px; }
.i16 { width: 16px; height: 16px; }
.i28 { width: 28px; height: 28px; }
.w8 { width: 8px; }
.w12 { width: 12px; }
.w16 { width: 16px; }
.w18 { width: 18px; }
.w19 { width: 19px; }
.w20 { width: 20px; }

.titlebar { display: flex; align-items: center; height: 21px; padding: 0 2px 3px 3px; }
.logo { width: 26px; height: 13px; background: #a81f3d; border-left: 3px solid #e04a63; gap: 2px; color: #fff; margin-right: 5px; }
.logo b { font-size: 9px; }
.logo small { font-size: 5px; font-weight: 700; }
.quick { display: flex; }
.share { color: #a3cdf2; gap: 3px; font-size: 9px; margin-left: 2px; }
h1 { flex: 1; margin: 0; padding: 4px 0 0 20px; text-align: center; font-size: 11px; line-height: 14px; font-weight: 400; color: #e3e3e9; }
.side { transform: rotate(-90deg); margin-right: 4px; }
.keyword { width: 134px; height: 14px; padding: 0 2px; border: 0; background: #46465a; color: #d3d4dd; font: italic 9px/14px Roboto, sans-serif; }
.keyword::placeholder { color: #b1b1c0; }
.account { gap: 2px; padding: 0 6px 0 1px; }
.help { gap: 6px; border-left: 1px solid #3a3b47; padding-left: 6px; margin-left: 6px; }
.help i { width: 12px; height: 12px; border-radius: 50%; background: #dfe0e6; color: #23242f; font-style: normal; font-weight: 700; line-height: 12px; }
.wincontrols { display: flex; gap: 1px; margin-left: 46px; }

.ribbontabs { display: flex; gap: 1px; height: 15px; padding-left: 3px; color: #a4a6b2; }
.ribbontabs button { padding: 1px 7px 0; }
.ribbontabs .on { background: #3c404d; color: #e3e3e9; }
.ribbontabs .mini { gap: 4px; margin-left: 4px; }
.mini span { width: 12px; height: 6px; background: #3a3b47; border: 2px solid #e8e8ee; border-width: 2px 4px; }

.ribbon { display: flex; height: 75px; margin-right: 3px; background: #3b404d; }
.panel { display: flex; flex-direction: column; flex: none; border-right: 1px solid #2e313d; color: #dcdde4; }
.body { display: flex; height: 60px; padding-top: 4px; }
.foot { height: 15px; gap: 6px; color: #c8cad3; }
.big { flex-direction: column; justify-content: flex-start; width: 34px; height: 54px; }
.big span { line-height: 13px; margin-top: 1px; }
.smalls { display: flex; flex-direction: column; }
.small { justify-content: flex-start; height: 18px; gap: 5px; }
.smalls > svg { margin: 1px 0; }
.draw { width: 168px; }
.draw .smalls { margin-left: 1px; }
.modify { width: 190px; }
.modify .body { padding-left: 4px; }
.tools { display: grid; grid-template-columns: 54px 54px 55px 1fr; grid-auto-rows: 18px; }
.tool { justify-content: flex-start; gap: 4px; }
.tool .i4 { margin-left: auto; margin-right: 9px; }
.annotation { width: 111px; }
.big.wide { width: 44px; }
.layers { width: 204px; }
.layers .body { gap: 1px; }
.layerside { flex: 1; }
.combo { width: 100%; height: 14px; margin: 2px 0; background: #4a5069; justify-content: flex-start; padding: 0 2px; text-align: left; color: #dcdde4; }
.combo span { flex: 1; margin-left: 2px; }
.swatch { width: 11px; height: 11px; background: #fff; margin: 0 2px; }
.rule { width: 48px; height: 1px; background: #d3d4dd; margin-left: 2px; }
.badges { display: grid; grid-template-columns: repeat(5, 18px); grid-auto-rows: 18px; }
.block { width: 61px; }
.block .small { gap: 3px; }
.properties { width: 167px; }
.properties .body { gap: 1px; padding-left: 2px; }
.combos { flex: 1; padding: 0 2px 0 1px; }
.combos .combo { margin-bottom: 4px; }
.groups { width: 53px; }
.utilities { width: 73px; }
.utilities .body { padding-left: 4px; justify-content: space-between; padding-right: 5px; }
.clipboard { width: 68px; }
.view { flex: 1; border: 0; }
.view .big { width: 46px; }
.launcher { justify-content: flex-end; padding-right: 10px; }

.filetabs { display: flex; align-items: center; height: 23px; padding: 2px 0 0 8px; border-bottom: 3px solid #3c3e4b; color: #d3d4dd; }
.slash { width: 1px; height: 12px; background: #50525e; transform: rotate(20deg); }
.start { padding: 0 7px 0 10px; }
.active { display: flex; align-items: center; height: 18px; padding: 0 8px 0 10px; gap: 5px; background: #3c404d; clip-path: polygon(6px 0, 100% 0, calc(100% - 6px) 100%, 0 100%); font-weight: 700; color: #fff; }
.filetabs .w20 { margin-right: 5px; }

.canvas { position: relative; flex: 1; min-height: 437px; border-bottom: 3px solid #3c3e4b; background: #232632; }
.drawing { position: absolute; inset: 0; width: 100%; height: 100%; }
.viewlabel { position: absolute; top: 2px; left: 2px; }
.viewclose { position: absolute; top: 4px; right: 7px; }
.navbar { position: absolute; top: 17px; right: 5px; display: flex; flex-direction: column; justify-content: space-between; width: 20px; height: 174px; padding: 11px 1px; background: #666772; }
.cmd { position: absolute; left: 232px; right: 235px; bottom: 0; }
.cmd p { margin: 0 0 2px 47px; font: 9px/13px "DejaVu Sans Mono", "Liberation Mono", monospace; color: #a7a9b4; }
.cmd p span { display: inline-block; padding: 0 1px; background: #484a56; line-height: 12px; }
.cmd .latest { color: #d0d1d9; margin-bottom: 3px; }
.cmdrow { display: flex; align-items: center; height: 17px; background: #2b2d3a; }
.grip { width: 4px; height: 13px; margin-left: 2px; background: repeating-linear-gradient(#8b8d98 0 1px, transparent 1px 2px); }
.cmdfield { flex: 1; display: flex; align-items: center; gap: 1px; height: 17px; padding: 0 3px; background: #bdbec6; }
.cmdfield input { flex: 1; border: 0; padding: 0 3px; background: none; font: italic 9px/15px "DejaVu Sans Mono", monospace; color: #33343f; }
.cmdfield input::placeholder { color: #4f505c; }

.layouts { display: flex; align-items: center; height: 23px; padding: 0 0 3px 7px; color: #d3d4dd; }
.layouts .model { height: 18px; padding: 0 13px 0 12px; background: #3c404d; clip-path: polygon(6px 0, 100% 0, calc(100% - 6px) 100%, 0 100%); font-weight: 700; color: #fff; margin-right: 7px; }
.layouts .slash { margin: 0 8px; }

.status { display: flex; justify-content: flex-end; height: 19px; padding-right: 3px; margin-left: 2px; background: #3b404d; color: #e3e3e9; }
.status button { flex: none; height: 18px; background: #393b49; }
.status .on { background: #5b86c0; border-left: 1px solid #393b49; }
.status .modelbtn { width: 39px; font-size: 9px; }
.status .ratio { width: 26px; gap: 3px; }

.palette { position: absolute; top: 70px; right: 27px; bottom: 62px; width: 281px; display: flex; padding: 3px 2px 2px 0; background: #2c2d39; }
.strip { display: flex; flex-direction: column; align-items: center; gap: 4px; width: 18px; background: #31323f; border-right: 1px solid #292a36; }
.strip button { width: 15px; height: 10px; }
.strip span { margin-top: auto; writing-mode: vertical-rl; transform: rotate(180deg); color: #dcdde4; }
.content { flex: 1; display: flex; flex-direction: column; margin-left: 1px; background: #434253; font-family: "Noto Sans", "Open Sans", sans-serif; }
.ptabs { display: flex; height: 29px; padding-left: 1px; background: #31323f; font-size: 11px; color: #c9c9d4; }
.ptabs button { width: 75px; }
.ptabs .on { background: #434253; color: #dedee6; }
.cards { padding: 9px 9px 0; display: flex; flex-direction: column; gap: 2px; }
article { background: #4b4b61; color: #a9a9bb; }
article header { display: flex; justify-content: space-between; height: 26px; padding: 0 4px 0 8px; }
article header button { gap: 8px; color: #ececf2; font: 600 9px/13px "Open Sans", "Noto Sans", sans-serif; }
.expanded header { height: 24px; }
.chev { width: 8px; height: 8px; fill: none; stroke: #b4b3c6; }
article p { margin: 8px 9px 9px; line-height: 13px; }
textarea { display: block; width: calc(100% - 18px); height: 53px; margin: 0 9px; padding: 4px 10px; border: 0; resize: none; background: #424257; color: #8b8b9d; font: inherit; }
.actions { display: flex; align-items: center; padding: 12px 15px 11px 13px; gap: 8px; }
.down { transform: rotate(180deg); }
.act { width: 52px; height: 19px; border: 1px solid #77778c; color: #e8e8ef; font-family: "Open Sans", sans-serif; font-weight: 600; margin-left: 4px; }
.act.wide { width: 58px; margin-left: auto; }
.content > a { margin: auto 0 22px 25px; color: #8fb4ea; text-decoration: none; }
.cursor { position: absolute; left: 145px; top: 58px; width: 10px; height: 14px; }
</style>
